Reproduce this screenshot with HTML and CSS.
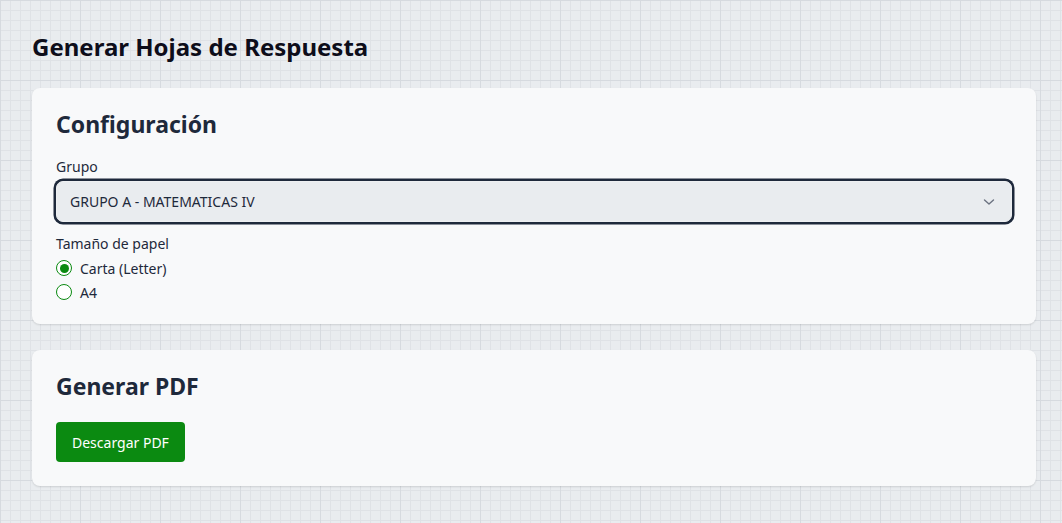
FILE: index.html
```html
<!DOCTYPE html>
<html lang="es">
<head>
<meta charset="utf-8">
<title>Generar Hojas de Respuesta</title>
<link rel="stylesheet" href="styles.css">
</head>
<body>
<main class="page">
  <h1 class="page-title">Generar Hojas de Respuesta</h1>

  <section class="card card-config">
    <h2 class="card-title">Configuración</h2>
    <div class="field">
      <div class="label">Grupo</div>
      <div class="select">
        <span>GRUPO A - MATEMATICAS IV</span>
        <svg class="chev" width="12" height="8" viewBox="0 0 12 8"><path d="M1.5 2 L6 6 L10.5 2" fill="none" stroke="#6b7280" stroke-width="1.4" stroke-linecap="round" stroke-linejoin="round"/></svg>
      </div>
    </div>
    <div class="field paper">
      <div class="label">Tamaño de papel</div>
      <div class="radio-row"><span class="radio checked"></span><span>Carta (Letter)</span></div>
      <div class="radio-row"><span class="radio"></span><span>A4</span></div>
    </div>
  </section>

  <section class="card card-pdf">
    <h2 class="card-title">Generar PDF</h2>
    <button class="btn">Descargar PDF</button>
  </section>
</main>
</body>
</html>
```

FILE: styles.css
```css
html, body {
  margin: 0;
  padding: 0;
}
body {
  width: 1062px;
  height: 523px;
  overflow: hidden;
  font-family: "Noto Sans", "Open Sans", sans-serif;
  color: #1e293b;
  background-color: #e9ecef;
  background-image:
    linear-gradient(to right, #d6dadf 1px, transparent 1px),
    linear-gradient(to bottom, #d6dadf 1px, transparent 1px),
    linear-gradient(to right, #dfe2e6 1px, transparent 1px),
    linear-gradient(to bottom, #dfe2e6 1px, transparent 1px);
  background-size: 80px 80px, 80px 80px, 10px 10px, 10px 10px;
}
.page {
  padding: 30px 26px 0 32px;
  display: flex;
  flex-direction: column;
}
.page-title {
  margin: 0 0 24px 0;
  font-size: 24px;
  line-height: 34px;
  font-weight: 700;
  color: #0d0d1a;
}
.card {
  background: #f8f9fa;
  border-radius: 8px;
  box-shadow: 0 1px 2px rgba(0, 0, 0, 0.12);
  padding: 21px 24px 24px 24px;
}
.card-config {
  padding-bottom: 20px;
  margin-bottom: 26px;
}
.card-title {
  margin: 0;
  font-size: 23px;
  line-height: 30px;
  font-weight: 700;
  color: #1e293b;
}
.field {
  margin-top: 18px;
}
.label {
  font-size: 14px;
  line-height: 20px;
  color: #1e293b;
}
.select {
  margin-top: 4px;
  height: 39px;
  border: 1px solid #eef0f2;
  border-radius: 7px;
  box-shadow: 0 0 0 2.5px #1e293b;
  background: #e9ecef;
  display: flex;
  align-items: center;
  justify-content: space-between;
  padding: 0 16px 0 13px;
  font-size: 14px;
  color: #1e293b;
}
.chev {
  display: block;
}
.paper {
  margin-top: 12px;
}
.paper .label {
  margin-bottom: 2px;
}
.radio-row {
  display: flex;
  align-items: center;
  gap: 8px;
  height: 24px;
  font-size: 14px;
  color: #1e293b;
}
.radio {
  width: 16px;
  height: 16px;
  box-sizing: border-box;
  border: 1.5px solid #0b8a11;
  border-radius: 50%;
  background: #fff;
  display: flex;
  align-items: center;
  justify-content: center;
}
.radio.checked::after {
  content: "";
  width: 9px;
  height: 9px;
  border-radius: 50%;
  background: #0b8a11;
}
.btn {
  display: block;
  margin-top: 21px;
  height: 40px;
  padding: 0 16px;
  border: none;
  border-radius: 4px;
  background: #0b8a11;
  color: #ffffff;
  font-family: "Noto Sans", "Open Sans", sans-serif;
  font-size: 14px;
}
```
